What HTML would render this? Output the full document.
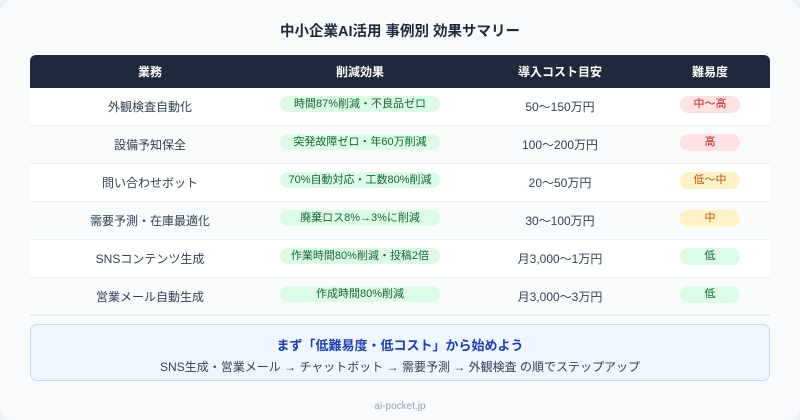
<!DOCTYPE html>
<html><head><meta charset="utf-8"><style>
*{margin:0;padding:0;box-sizing:border-box}
body{width:800px;height:420px;background:#eef1f5;font-family:"Liberation Sans","Noto Sans CJK JP",sans-serif;overflow:hidden}
.card{position:absolute;left:0;top:0;width:800px;height:420px;background:#f8fafc;border-radius:14px}
.title{position:absolute;top:20px;left:0;width:800px;text-align:center;font-size:14.5px;font-weight:bold;color:#1e293b}
.tbl{position:absolute;left:30px;top:55px;width:740px}
.hd{position:relative;height:33px;background:#1e293b;border-radius:6px 6px 0 0;color:#fff;font-weight:bold;font-size:12px}
.row{position:relative;height:38px;border-bottom:1px solid #e8edf3;font-size:12px;color:#334155}
.t{position:absolute;white-space:nowrap;transform:translateX(-50%);line-height:16px}
.hd .t{top:9px}
.row .t{top:11px}
.g{position:absolute;left:250px;top:8px;width:160px;height:16px;line-height:16px;border-radius:8px;background:#dcfce7;color:#166534;font-size:11px;text-align:center;white-space:nowrap}
.d{position:absolute;left:650px;top:8px;width:60px;height:17px;line-height:17px;border-radius:9px;font-size:11px;text-align:center}
.r{background:#fee2e2;color:#b91c1c}.y{background:#fef3c7;color:#b45309}.gr{background:#dcfce7;color:#166534}
.note{position:absolute;left:30px;top:324px;width:740px;height:57px;background:#eff6ff;border:1px solid #bfdbfe;border-radius:7px;text-align:center}
.n1{margin-top:10px;font-size:13px;font-weight:bold;color:#1e40af}
.n2{margin-top:4px;font-size:12px;color:#334155}
.ft{position:absolute;top:401px;width:800px;text-align:center;font-size:10px;color:#94a3b8}
</style></head><body><div class="card">
<div class="title">中小企業AI活用 事例別 効果サマリー</div>
<div class="tbl">
<div class="hd"><span class="t" style="left:120px">業務</span><span class="t" style="left:330px">削減効果</span><span class="t" style="left:530px">導入コスト目安</span><span class="t" style="left:680px">難易度</span></div>
<div class="row" style="background:#fff"><span class="t" style="left:120px">外観検査自動化</span><span class="g">時間87%削減・不良品ゼロ</span><span class="t" style="left:530px">50〜150万円</span><span class="d r">中〜高</span></div>
<div class="row" style="background:#f8fafc"><span class="t" style="left:120px">設備予知保全</span><span class="g">突発故障ゼロ・年60万削減</span><span class="t" style="left:530px">100〜200万円</span><span class="d r">高</span></div>
<div class="row" style="background:#fff"><span class="t" style="left:120px">問い合わせボット</span><span class="g">70%自動対応・工数80%削減</span><span class="t" style="left:530px">20〜50万円</span><span class="d y">低〜中</span></div>
<div class="row" style="background:#f8fafc"><span class="t" style="left:120px">需要予測・在庫最適化</span><span class="g">廃棄ロス8%→3%に削減</span><span class="t" style="left:530px">30〜100万円</span><span class="d y">中</span></div>
<div class="row" style="background:#fff"><span class="t" style="left:120px">SNSコンテンツ生成</span><span class="g">作業時間80%削減・投稿2倍</span><span class="t" style="left:530px">月3,000〜1万円</span><span class="d gr">低</span></div>
<div class="row" style="background:#f8fafc;border-bottom:2px solid #e8edf3"><span class="t" style="left:120px">営業メール自動生成</span><span class="g">作成時間80%削減</span><span class="t" style="left:530px">月3,000〜3万円</span><span class="d gr">低</span></div>
</div>
<div class="note"><div class="n1">まず「低難易度・低コスト」から始めよう</div><div class="n2">SNS生成・営業メール → チャットボット → 需要予測 → 外観検査 の順でステップアップ</div></div>
<div class="ft">ai-pocket.jp</div>
</div></body></html>
